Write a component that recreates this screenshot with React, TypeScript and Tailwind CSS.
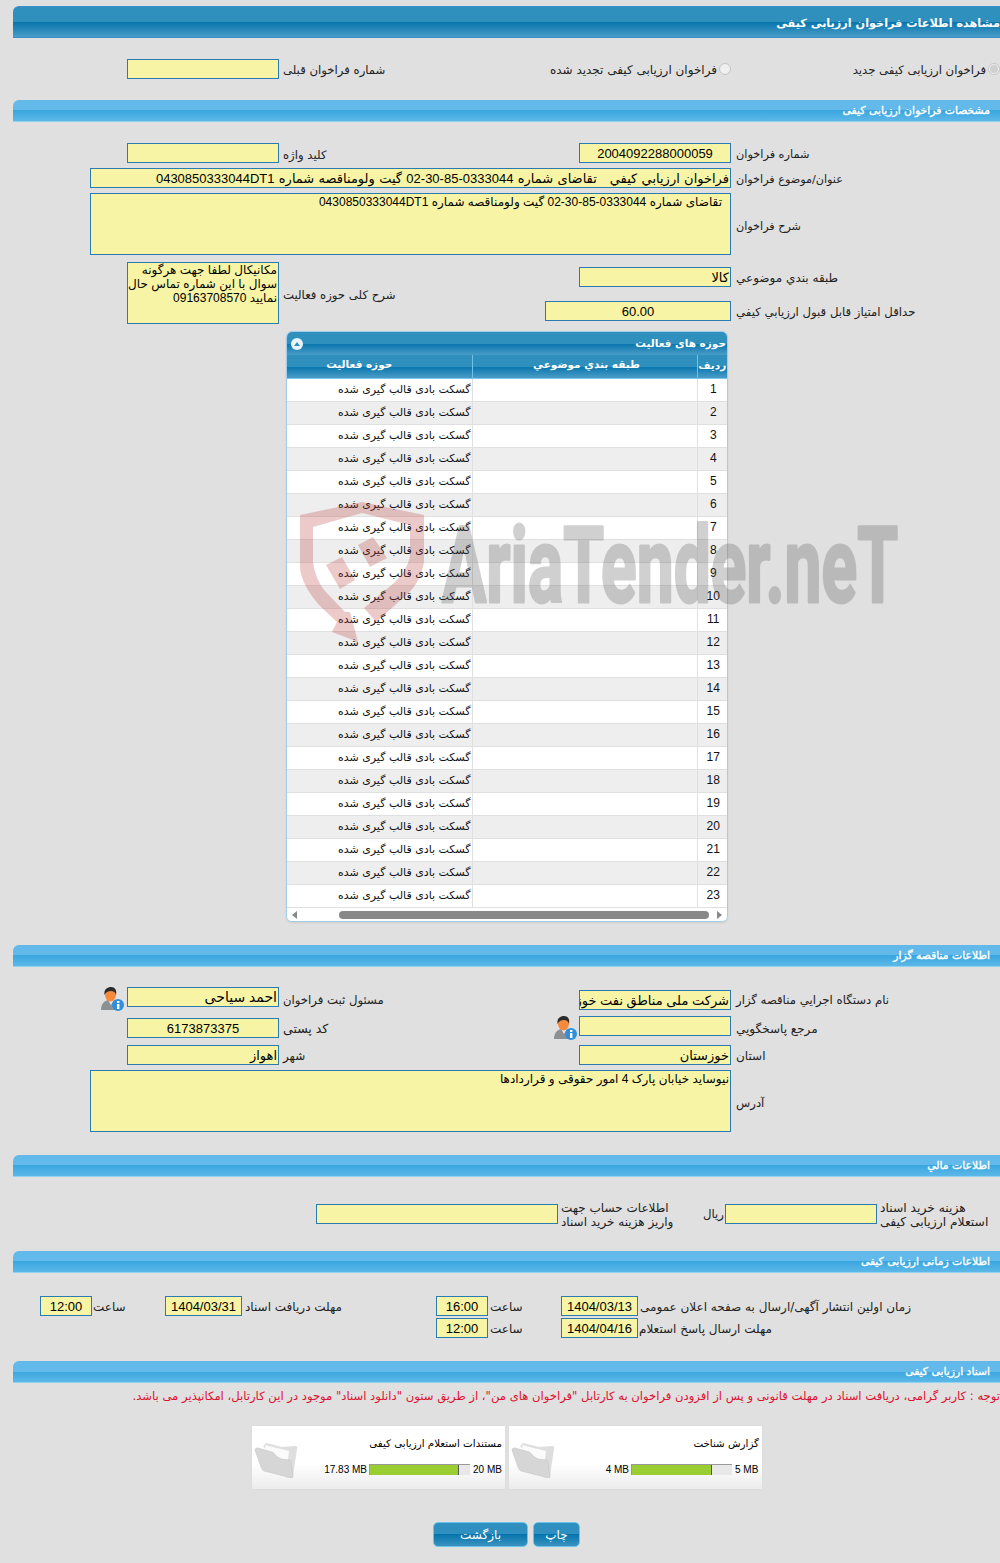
import React from "react";

const GRID = "grid grid-cols-[90px_37px_152px_300px_152px_269px]";
const F = "border border-[#2a7bb0] bg-[#f7f5a5] text-black overflow-hidden [font-family:'Liberation_Sans','DejaVu_Sans',sans-serif]";

function Field({ v, c = false, cls = "" }: { v?: string; c?: boolean; cls?: string }) {
  return <div dir="rtl" className={`${F} h-5 w-full whitespace-nowrap px-px text-[13px] leading-[19px] ${c ? "text-center" : "text-right"} ${cls}`}>{v}</div>;
}
function Area({ v, cls = "" }: { v: string; cls?: string }) {
  return <div dir="rtl" className={`${F} h-[62px] w-full whitespace-pre text-right text-[12px] ${cls}`}>{v}</div>;
}
function Label({ t, cls = "" }: { t: string; cls?: string }) {
  return <div dir="rtl" className={`whitespace-nowrap text-left text-[11.7px] leading-5 text-[#222] ${cls}`}>{t}</div>;
}
function Section({ t, cls = "" }: { t: string; cls?: string }) {
  return (
    <div dir="rtl" className={`ml-[13px] h-[22px] rounded-tl-[6px] border-b border-[#8fd3f0] bg-[linear-gradient(#61b9ea_0,#64baea_50%,#3aa6df_50%,#5cb8e8_100%)] pr-[10px] text-[10.8px] font-normal leading-[22px] text-white [-webkit-text-stroke:0.35px_#fff] ${cls}`}>{t}</div>
  );
}
function Person({ cls = "" }: { cls?: string }) {
  return (
    <svg viewBox="0 0 24 24" className={`h-6 w-6 ${cls}`}>
      <path d="M1 23c0-6 3-9 7-10h6c4 1 6 4 6 10z" fill="#8d9093" />
      <path d="M8 13l3 5 3-5z" fill="#e4e6e8" />
      <ellipse cx="10.5" cy="8" rx="5.5" ry="6.5" fill="#f58a3c" />
      <path d="M4.5 8C3.5 2 8 0 11 0c4 0 6 3 5 8-1-3-2-4-5-4S6 5 4.5 8z" fill="#2b2b2b" />
      <circle cx="18" cy="18" r="6" fill="#2f8fdc" />
      <rect x="17" y="17" width="2.4" height="5" fill="#fff" />
      <rect x="17" y="14" width="2.4" height="2" fill="#fff" />
    </svg>
  );
}
function Folder() {
  return (
    <svg viewBox="0 0 44 38" className="h-[38px] w-[44px]">
      <path d="M9 6l3-3 16 4 13-1c2 0 3 1 2 3l-4 27-10-8z" fill="#dedede" />
      <path d="M11 5l24 6-2 18-20-6z" fill="#fbfbfb" />
      <path d="M1 10c0-2 2-2 3-2l14 4c2 1 3 2 4 4l5 3 8 1c2 0 2 1 2 3l2 13c0 2-1 2-3 2l-6-2L10 31c-2-1-2-2-3-4z" fill="#d6d6d6" stroke="#c4c4c4" strokeWidth=".6" />
    </svg>
  );
}
function Card({ title, l, r, pct, lw }: { title: string; l: string; r: string; pct: string; lw: string }) {
  return (
    <div className="flex h-[63px] w-[253px] bg-[linear-gradient(#ffffff_0,#ffffff_60%,#ececec_100%)] shadow-[0_0_1px_#ccc]">
      <div className="ml-[2px] mt-[14px]"><Folder /></div>
      <div className="flex-1 pt-[9px]">
        <div dir="rtl" className="h-[16px] pr-[3px] text-[10.3px] leading-[16px] text-black whitespace-nowrap">{title}</div>
        <div className="mt-[13px] flex items-center text-[10px] leading-[11px] text-black [font-family:'Liberation_Sans',sans-serif]">
          <div className={`${lw} pr-[2px] text-right`}>{l}</div>
          <div className="h-[11px] w-[101px] border-t border-l border-[#999] bg-[#e8e8e8]">
            <div className={`h-[10px] border-r border-[#555] bg-[#9acd32] ${pct}`} />
          </div>
          <div className="pl-[3px]">{r}</div>
        </div>
      </div>
    </div>
  );
}
function Btn({ t, cls }: { t: string; cls: string }) {
  return (
    <div className={`h-[25px] rounded-[5px] border border-[#6cc5e8] bg-[linear-gradient(#2f90bf_0,#2f90bf_50%,#0675ad_50%,#3a93c0_100%)] text-center text-[12px] leading-[24px] text-white ${cls}`}>{t}</div>
  );
}

const rows = Array.from({ length: 23 }, (_, i) => i + 1);
const DARK = "bg-[linear-gradient(#2f8fbd_0,#2f8fbd_50%,#0675ad_50%,#4a9cc6_100%)]";
const ROWL = "!text-[12px]";
const TL = "mt-[2px] !text-[12px]";

export default function App() {
  return (
    <div className="relative h-[1563px] w-[1000px] overflow-hidden bg-[#e0e0e0] pt-[6px] [font-family:'DejaVu_Sans',sans-serif]">
      <div dir="rtl" className={`ml-[13px] h-[32px] rounded-tl-[6px] border-t border-b border-[#3a8fd0] ${DARK} text-[11.25px] font-bold leading-[33px] text-white whitespace-nowrap`}>مشاهده اطلاعات فراخوان ارزیابی کیفی</div>

      <div className="mt-[21px] grid h-5 grid-cols-[127px_152px_452px_269px] items-center">
        <div />
        <Field />
        <div className="flex h-5 items-center justify-between pl-1">
          <Label t="شماره فراخوان قبلی" cls="mt-[2px]" />
          <div dir="rtl" className="flex h-5 items-center gap-[2px]">
            <span className="h-3 w-3 rounded-full border border-[#c4c4c4] bg-[#efefef]" />
            <Label t="فراخوان ارزیابی کیفی تجدید شده" cls={`mt-[2px] ${ROWL}`} />
          </div>
        </div>
        <div dir="rtl" className="flex h-5 items-center gap-[2px]">
          <span className="flex h-3 w-3 items-center justify-center rounded-full border border-[#c4c4c4] bg-[#efefef]"><span className="h-2 w-2 rounded-full bg-[#d0d0d0]" /></span>
          <Label t="فراخوان ارزیابی کیفی جدید" cls="mt-[2px]" />
        </div>
      </div>

      <Section t="مشخصات فراخوان ارزیابی کیفی" cls="mt-[21px]" />

      <div className={`${GRID} mt-[21px] grid-rows-[20px_20px_62px_36px_20px] gap-y-[5px] [&>*]:self-start`}>
        <div className="col-start-3"><Field /></div>
        <Label t="کلید واژه" cls="pl-1 mt-[2px]" />
        <Field v="2004092288000059" c />
        <Label t="شماره فراخوان" cls="pl-[5px] mt-[2px] !text-[11.3px]" />

        <div className="col-start-2 col-end-6"><Field v="فراخوان ارزيابي كيفي   تقاضای شماره 0333044-85-30-02 گیت ولومناقصه شماره 0430850333044DT1" cls="whitespace-pre [word-spacing:0.7px]" /></div>
        <Label t="عنوان/موضوع فراخوان" cls="pl-[5px] mt-[2px] !text-[11.2px]" />

        <div className="col-start-2 col-end-6"><Area v="تقاضای شماره 0333044-85-30-02 گیت ولومناقصه شماره 0430850333044DT1" cls="pr-[8px] leading-[16px]" /></div>
        <Label t="شرح فراخوان" cls="pl-[5px] mt-[24px] !text-[11.2px]" />

        <div className="col-start-3 row-span-2 mt-[2px]"><Area v={"مکانیکال لطفا جهت هرگونه\nسوال با این شماره تماس حال\nنمایید 09163708570"} cls="px-px leading-[14px]" /></div>
        <Label t="شرح کلی حوزه فعالیت" cls="row-span-2 pl-1 mt-[25px]" />
        <div className="mt-[7px] col-start-5"><Field v="کالا" /></div>
        <Label t="طبقه بندي موضوعي" cls={`pl-[5px] mt-[8px] ${ROWL}`} />
        <div className="col-start-5 -ml-[34px]"><Field v="60.00" c /></div>
        <Label t="حداقل امتياز قابل قبول ارزيابي کيفي" cls="col-start-6 pl-[5px] mt-px" />
      </div>

      <div className="ml-[286px] mt-[10px] h-[591px] w-[442px] overflow-hidden rounded-[6px] border border-[#a5cde9] bg-white shadow-[0_1px_2px_#ccc]">
        <div dir="rtl" className={`flex h-[23px] items-center justify-between pr-px pl-[4px] ${DARK} text-[10.5px] font-bold text-white`}>
          <span>حوزه های فعالیت</span>
          <span className="flex h-3 w-3 items-center justify-center rounded-full bg-[#e9f3f9]"><span className="h-0 w-0 border-x-[3.5px] border-b-[4px] border-x-transparent border-b-[#2f8fbd]" /></span>
        </div>
        <table dir="rtl" className="w-[440px] table-fixed border-collapse">
          <colgroup><col className="w-[30px]" /><col className="w-[225px]" /><col /></colgroup>
          <thead>
            <tr className={`h-[23px] ${DARK} text-center text-[10.5px] font-bold text-white`}>
              <th className="border-l border-[#6fc1ea] font-bold">ردیف</th>
              <th className="border-l border-[#6fc1ea] pl-[4px] pb-[3px] font-bold">طبقه بندي موضوعي</th>
              <th className="pb-[3px] pr-[40px] font-bold">حوزه فعالیت</th>
            </tr>
          </thead>
          <tbody className="border-t border-[#7cc6ec]">
            {rows.map((n) => (
              <tr key={n} className={`h-[23px] border-b border-[#e0e0e0] text-[11px] text-[#111] ${n % 2 === 0 ? "bg-[#eeeeee]" : "bg-white"}`}>
                <td className="border-l border-[#e0e0e0] pl-[2px] pb-px text-center [font-family:'Liberation_Sans',sans-serif] text-[12px]">{n}</td>
                <td className="border-l border-[#e0e0e0]" />
                <td className="pr-[1px] pt-px text-right whitespace-nowrap">گسکت بادی قالب گیری شده</td>
              </tr>
            ))}
          </tbody>
        </table>
        <div className="flex h-[15px] items-center justify-between bg-white px-[5px]">
          <span className="h-0 w-0 border-y-[4px] border-r-[5px] border-y-transparent border-r-[#888]" />
          <span className="mb-px ml-[42px] mr-[8px] h-[8px] flex-1 rounded-full bg-[#888]" />
          <span className="h-0 w-0 border-y-[4px] border-l-[5px] border-y-transparent border-l-[#888]" />
        </div>
      </div>

      <Section t="اطلاعات مناقصه گزار" cls="mt-[23px]" />

      <div className={`${GRID} relative mt-[20px] grid-rows-[29px_29px_20px_67px] [&>*]:self-start`}>
        <div className="col-start-2 pl-[10px]"><Person /></div>
        <Field v="احمد سیاحی" cls="text-[14px]" />
        <Label t="مسئول ثبت فراخوان" cls="pl-1 mt-[3px]" />
        <div className="mt-[3px]"><Field v="شرکت ملی مناطق نفت خوزستان" /></div>
        <Label t="نام دستگاه اجرايي مناقصه گزار" cls="pl-[5px] mt-[3px]" />

        <div className="col-start-3 mt-[2px]"><Field v="6173873375" c /></div>
        <Label t="کد پستی" cls="pl-1 mt-[3px] !text-[12.5px]" />
        <div><Field /></div>
        <Label t="مرجع پاسخگويي" cls={`pl-[5px] mt-[3px] ${ROWL}`} />

        <div className="col-start-3"><Field v="اهواز" /></div>
        <Label t="شهر" cls={`pl-1 mt-px ${ROWL}`} />
        <div><Field v="خوزستان" /></div>
        <Label t="استان" cls={`pl-[5px] mt-px ${ROWL}`} />

        <div className="col-start-2 col-end-6 mt-[5px]"><Area v="نیوساید خیابان پارک 4 امور حقوقی و قراردادها" cls="px-px leading-[16px]" /></div>
        <Label t="آدرس" cls="pl-[5px] mt-[28px]" />
        <div className="absolute left-[553px] top-[29px]"><Person /></div>
      </div>

      <Section t="اطلاعات مالي" cls="mt-[23px]" />

      <div className="mt-[27px] flex h-[20px] items-center">
        <div className="ml-[316px] w-[242px]"><Field /></div>
        <div className="ml-[3px] mt-[2px] w-[142px] text-[12px] leading-[14px] text-[#222]">
          <div dir="rtl" className="whitespace-nowrap text-left">اطلاعات حساب جهت</div>
          <div dir="rtl" className="whitespace-nowrap text-left">واریز هزینه خرید اسناد</div>
        </div>
        <Label t="ريال" cls="w-[22px]" />
        <div className="w-[152px]"><Field /></div>
        <div className="ml-[3px] mt-[2px] w-[120px] text-[12.3px] leading-[14px] text-[#222]">
          <div dir="rtl" className="whitespace-nowrap text-left">هزینه خرید اسناد</div>
          <div dir="rtl" className="whitespace-nowrap text-left">استعلام ارزیابی کیفی</div>
        </div>
      </div>

      <Section t="اطلاعات زمانی ارزیابی کیفی" cls="mt-[27px]" />

      <div className="mt-[23px] flex h-[20px] items-center">
        <div className="ml-[40px] w-[52px]"><Field v="12:00" c /></div>
        <Label t="ساعت" cls={`ml-px w-[72px] ${TL}`} />
        <div className="w-[77px]"><Field v="1404/03/31" c /></div>
        <Label t="مهلت دریافت اسناد" cls={`ml-[3px] w-[191px] ${TL}`} />
        <div className="w-[52px]"><Field v="16:00" c /></div>
        <Label t="ساعت" cls={`ml-[2px] w-[71px] ${TL}`} />
        <div className="w-[77px]"><Field v="1404/03/13" c /></div>
        <Label t="زمان اولین انتشار آگهی/ارسال به صفحه اعلان عمومی" cls={`ml-[2px] ${TL}`} />
      </div>
      <div className="mt-[2px] flex h-[20px] items-center">
        <div className="ml-[436px] w-[52px]"><Field v="12:00" c /></div>
        <Label t="ساعت" cls={`ml-[2px] w-[71px] ${TL}`} />
        <div className="w-[77px]"><Field v="1404/04/16" c /></div>
        <Label t="مهلت ارسال پاسخ استعلام" cls={`ml-px ${TL}`} />
      </div>

      <Section t="اسناد ارزیابی کیفی" cls="mt-[23px]" />

      <div dir="rtl" className="mt-[6px] h-[14px] whitespace-nowrap text-[11.6px] leading-[14px] text-[#e0102f]">توجه : کاربر گرامی، دریافت اسناد در مهلت قانونی و پس از افزودن فراخوان به کارتابل "فراخوان های من"، از طریق ستون "دانلود اسناد" موجود در این کارتابل، امکانپذیر می باشد.</div>

      <div className="ml-[252px] mt-[23px] flex gap-[4px]">
        <Card title="مستندات استعلام ارزیابی کیفی" l="17.83 MB" r="20 MB" pct="w-[89%]" lw="w-[71px]" />
        <Card title="گزارش شناخت" l="4 MB" r="5 MB" pct="w-[80%]" lw="w-[76px]" />
      </div>

      <div className="ml-[433px] mt-[33px] flex gap-[5px]">
        <Btn t="بازگشت" cls="w-[95px]" />
        <Btn t="چاپ" cls="w-[47px]" />
      </div>

      <svg className="pointer-events-none absolute left-0 top-0 h-[1563px] w-[1000px]" viewBox="0 0 1000 1563">
        <path fillRule="evenodd" fill="#b93a3a" fillOpacity=".27" d="M300 515L362 502L424 515V562Q420 585 403 598L376 622L364 608L388 588Q408 572 410 555V525L362 513L313 527V562Q315 578 324 590L345 612L350 612L358 642L332 632L337 622L320 606Q302 586 300 568Z" />
        <path fill="#b93a3a" fillOpacity=".27" d="M358 545L373 537L387 558L370 567ZM326 565L342 557L355 580L340 589Z" />
        <g opacity=".27">
          <text x="442" y="602" textLength="456" lengthAdjust="spacingAndGlyphs" fontSize="105" fontWeight="700" fill="#555" stroke="#555" strokeWidth="3" strokeLinejoin="round" fontFamily="Roboto, sans-serif">AriaTender.neT</text>
        </g>
      </svg>
    </div>
  );
}
